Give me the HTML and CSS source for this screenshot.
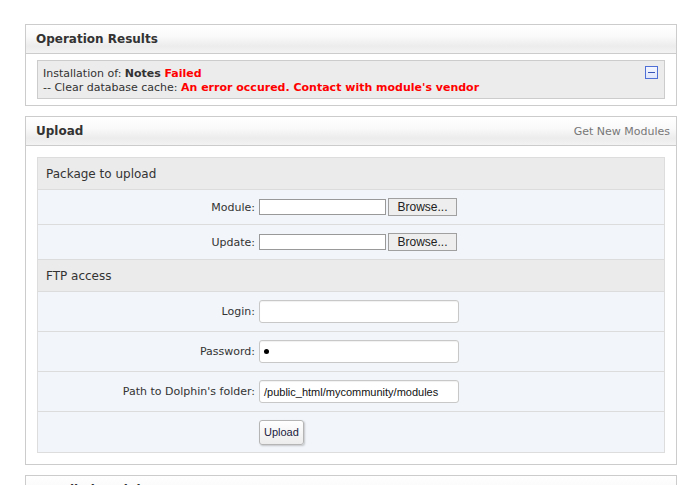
FILE: index.html
```html
<!DOCTYPE html>
<html>
<head>
<meta charset="utf-8">
<link rel="stylesheet" href="styles.css">
</head>
<body>
<div class="page">
  <section class="box">
    <div class="box-head">
      <span class="box-title">Operation Results</span>
    </div>
    <div class="box-body">
      <div class="result">
        <div class="result-text">
          <div>Installation of: <b>Notes</b> <b class="err">Failed</b></div>
          <div>-- Clear database cache: <b class="err">An error occured. Contact with module's vendor</b></div>
        </div>
        <span class="collapse"><span class="collapse-dash"></span></span>
      </div>
    </div>
  </section>

  <section class="box">
    <div class="box-head">
      <span class="box-title">Upload</span>
      <a class="head-link">Get New Modules</a>
    </div>
    <div class="box-body upload-body">
      <div class="form">
        <div class="sect">Package to upload</div>
        <div class="row file-row">
          <label class="lbl">Module:</label>
          <div class="ctl"><span class="file-input"></span><span class="browse">Browse...</span></div>
        </div>
        <div class="row file-row">
          <label class="lbl">Update:</label>
          <div class="ctl"><span class="file-input"></span><span class="browse">Browse...</span></div>
        </div>
        <div class="sect">FTP access</div>
        <div class="row">
          <label class="lbl">Login:</label>
          <div class="ctl"><span class="text-input"></span></div>
        </div>
        <div class="row">
          <label class="lbl">Password:</label>
          <div class="ctl"><span class="text-input"><span class="dot"></span></span></div>
        </div>
        <div class="row">
          <label class="lbl">Path to Dolphin's folder:</label>
          <div class="ctl"><span class="text-input">/public_html/mycommunity/modules</span></div>
        </div>
        <div class="row submit-row">
          <span class="lbl"></span>
          <div class="ctl"><span class="btn">Upload</span></div>
        </div>
      </div>
    </div>
  </section>

  <section class="box">
    <div class="box-head">
      <span class="box-title">Installed Modules</span>
    </div>
  </section>
</div>
</body>
</html>
```

FILE: styles.css
```css
html, body {
  margin: 0;
  padding: 0;
  background: #fff;
}
body {
  font-family: "DejaVu Sans", Verdana, sans-serif;
  font-size: 11px;
  color: #333;
  overflow: hidden;
}
.page {
  width: 652px;
  padding: 24px 0 0 25px;
}
.box {
  border: 1px solid #ccc;
  margin-bottom: 10px;
  background: #fff;
}
.box-head {
  height: 28px;
  display: flex;
  align-items: center;
  justify-content: space-between;
  padding: 0 6px 0 10px;
  border-bottom: 1px solid #ccc;
  background: linear-gradient(#ffffff 0%, #fafafa 40%, #ececec 75%, #f3f3f3 100%);
}
.box-title {
  font-weight: bold;
  font-size: 12px;
  color: #333;
}
.head-link {
  color: #777;
  font-size: 11px;
}
.box-body {
  padding: 6px 11px 6px 11px;
}
.result {
  background: #ececec;
  border: 1px solid #ccc;
  padding: 6px 6px 3px 5px;
  display: flex;
  justify-content: space-between;
  align-items: flex-start;
  line-height: 14px;
}
.err {
  color: #f00;
}
.collapse {
  width: 11px;
  height: 11px;
  border: 1px solid #4f6fd6;
  background: linear-gradient(#f4f7ff, #dfe6fb);
  display: flex;
  align-items: center;
  justify-content: center;
  margin-top: -1px;
}
.collapse-dash {
  width: 7px;
  height: 1px;
  background: #3a55b8;
}
.upload-body {
  padding: 11px 11px 11px 11px;
}
.form {
  border: 1px solid #ddd;
  background: #f2f5f9;
}
.sect {
  height: 31px;
  display: flex;
  align-items: center;
  padding-left: 8px;
  background: #ebebeb;
  font-size: 12px;
  color: #333;
}
.row {
  display: grid;
  grid-template-columns: 217px 1fr;
  column-gap: 4px;
  align-items: center;
  height: 39px;
  border-top: 1px solid #dcdcdc;
}
.row + .sect { border-top: 1px solid #dcdcdc; }
.file-row {
  height: 34px;
}
.lbl {
  text-align: right;
  color: #333;
}
.ctl {
  display: flex;
  align-items: center;
}
.file-input {
  width: 125px;
  height: 14px;
  border: 1px solid #999;
  background: #fff;
}
.browse {
  margin-left: 2px;
  width: 67px;
  height: 16px;
  border: 1px solid #a0a0a0;
  background: #eee;
  font-family: "Liberation Sans", Arial, sans-serif;
  font-size: 12px;
  color: #222;
  display: flex;
  align-items: center;
  justify-content: center;
}
.text-input {
  width: 194px;
  height: 21px;
  border: 1px solid #c8c8c8;
  border-radius: 3px;
  background: #fff;
  padding-left: 4px;
  display: flex;
  align-items: center;
  font-family: "Liberation Sans", Arial, sans-serif;
  font-size: 11px;
  color: #111;
  box-shadow: inset 0 1px 1px rgba(0,0,0,0.06);
  white-space: nowrap;
  overflow: hidden;
}
.dot {
  width: 5px;
  height: 5px;
  border-radius: 50%;
  background: #000;
}
.submit-row {
  height: 40px;
}
.btn {
  height: 23px;
  padding: 0 4px;
  border: 1px solid #b5b5b5;
  border-radius: 3px;
  background: linear-gradient(#ffffff, #ececec);
  box-shadow: 1px 1px 2px rgba(0,0,0,0.2);
  font-family: "Liberation Sans", Arial, sans-serif;
  font-size: 11px;
  color: #1a1a40;
  display: flex;
  align-items: center;
}
```
